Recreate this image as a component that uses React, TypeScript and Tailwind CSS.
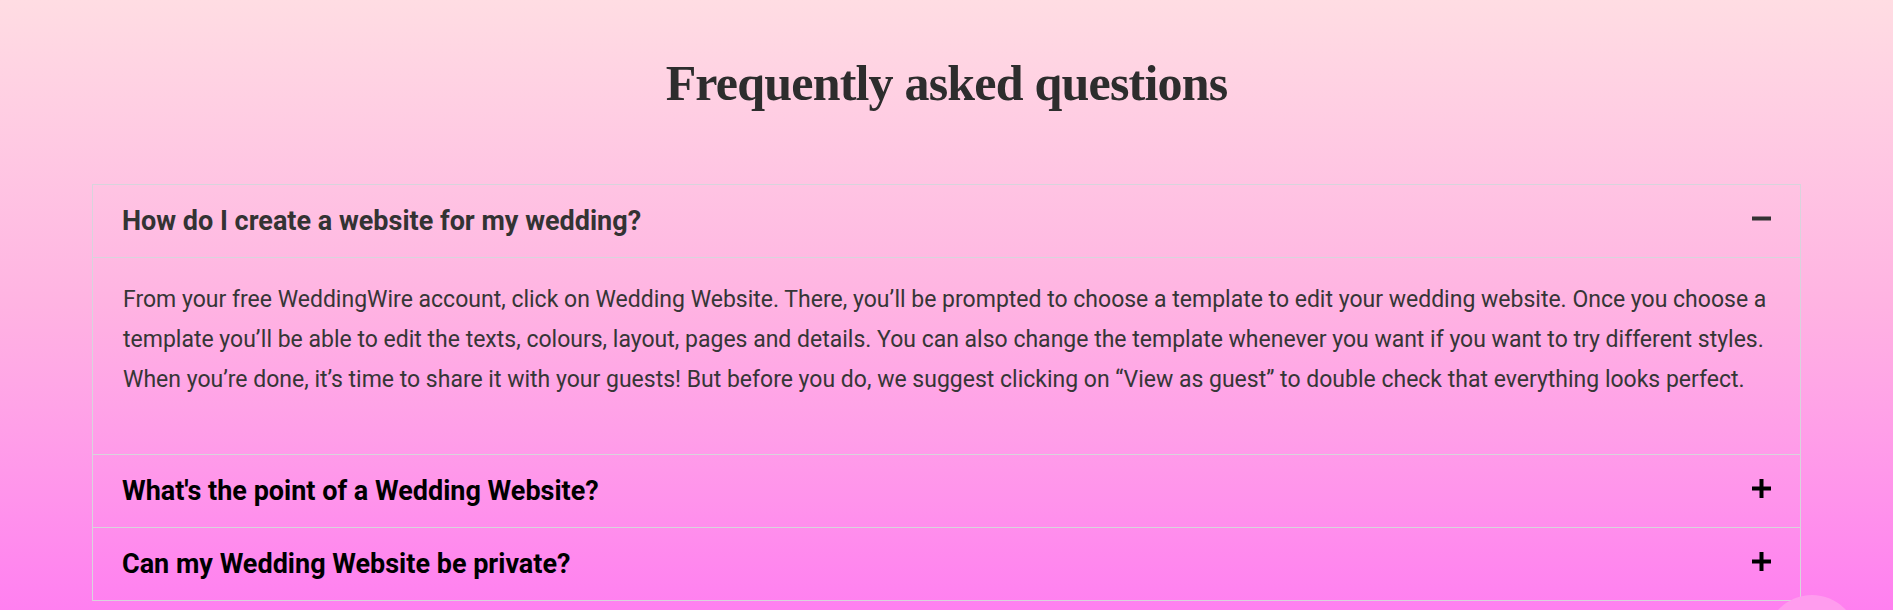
import { useState } from "react";

const faqs = [
  {
    q: "How do I create a website for my wedding?",
    a: "From your free WeddingWire account, click on Wedding Website. There, you’ll be prompted to choose a template to edit your wedding website. Once you choose a template you’ll be able to edit the texts, colours, layout, pages and details. You can also change the template whenever you want if you want to try different styles. When you’re done, it’s time to share it with your guests! But before you do, we suggest clicking on “View as guest” to double check that everything looks perfect.",
  },
  {
    q: "What's the point of a Wedding Website?",
    a: "It's one place where guests can find all the details about your big day: dates, venues, travel info and your gift list.",
  },
  {
    q: "Can my Wedding Website be private?",
    a: "Yes. You can add a password so only the guests you share it with can see it.",
  },
];

function ToggleIcon({ open }: { open: boolean }) {
  return (
    <svg width="19" height="19" viewBox="0 0 19 19" className="shrink-0 -mt-[5px]">
      <rect x="0" y="7.5" width="19" height="4" fill="currentColor" />
      {!open && <rect x="7.5" y="0" width="4" height="19" fill="currentColor" />}
    </svg>
  );
}

export default function App() {
  const [open, setOpen] = useState<number | null>(0);

  return (
    <div className="relative min-h-screen overflow-hidden bg-gradient-to-b from-[#ffdde3] via-[#ffb3e2] to-[#ff7ff0] pt-[58px] font-['Roboto',sans-serif]">
      <h2 className="text-center text-[50px] leading-[50px] font-bold tracking-[-0.8px] text-[#2d2d2d] font-['Liberation_Serif',serif]">
        Frequently asked questions
      </h2>

      {/* Accordion */}
      <div className="mx-auto mt-[76px] w-[1709px] border-b border-x border-[#d8d4dc]">
        {faqs.map((item, i) => {
          const isOpen = open === i;
          return (
            <div key={i} className="border-t border-[#d8d4dc]">
              <button
                onClick={() => setOpen(isOpen ? null : i)}
                className={`flex h-[72px] w-full items-center justify-between px-[29px] text-left text-[27px] font-bold ${
                  isOpen ? "text-[#333333]" : "text-black"
                }`}
              >
                <span>{item.q}</span>
                <ToggleIcon open={isOpen} />
              </button>
              {isOpen && (
                <div className="border-t border-[#d8d4dc] px-[30px] pt-[22px] pb-[54px]">
                  <p className="text-[23px] leading-[40px] text-[#363636]">{item.a}</p>
                </div>
              )}
            </div>
          );
        })}
      </div>

      {/* floating button peeking at bottom right */}
      <div className="absolute left-[1766px] top-[595px] h-[92px] w-[92px] rounded-full bg-[#ff9cee]" />
    </div>
  );
}
